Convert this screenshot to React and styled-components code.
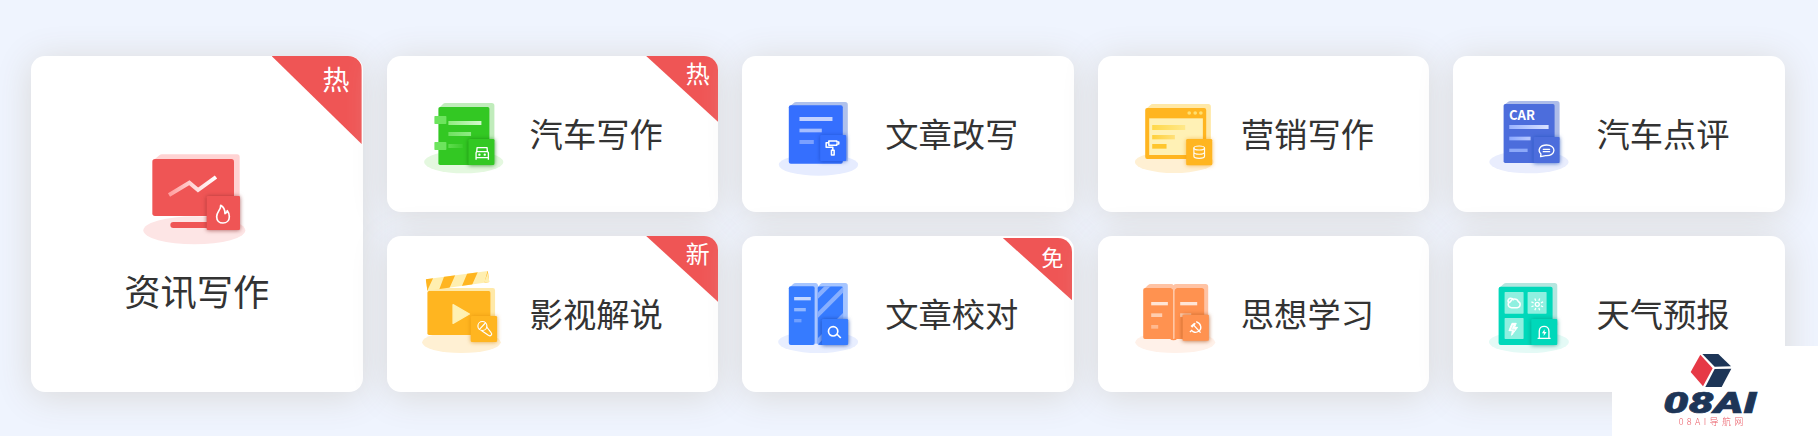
import React from "react";
import styled, { createGlobalStyle, css } from "styled-components";

const GlobalStyle = createGlobalStyle`
  * { box-sizing: border-box; }
  body {
    margin: 0;
    background: #eff4fe;
    font-family: "Noto Sans CJK SC", "Noto Sans", sans-serif;
    color: #333;
  }
`;

const Page = styled.main`
  position: relative;
  height: 436px;
  padding: 56px 33px 44px 31px;
  overflow: hidden;
`;

const Grid = styled.section`
  display: grid;
  grid-template-columns: repeat(5, minmax(0, 1fr));
  grid-template-rows: repeat(2, 156px);
  gap: 24px;
`;

const Card = styled.article`
  position: relative;
  display: flex;
  align-items: center;
  gap: 19px;
  padding-left: 32px;
  border-radius: 14px;
  background: #fff;
  box-shadow: 0 4px 36px #d9d8d8;
  ${(p) =>
    p.$large &&
    css`
      grid-row: span 2;
      flex-direction: column;
      gap: 15px;
      padding: 94px 0 0;
    `}
`;

const CardTitle = styled.h2`
  margin: 0;
  padding-bottom: 3px;
  font-weight: 400;
  font-size: ${(p) => (p.$large ? 36.3 : 33.3)}px;
  line-height: 50px;
  white-space: nowrap;
`;

const ribbonSizes = {
  large: { w: 90, h: 88, top: 0, right: 1, font: 27, padTop: 6, padRight: 12 },
  normal: { w: 72, h: 66, top: 0, right: 0, font: 24, padTop: 0, padRight: 8.5 },
  inset: { w: 70, h: 63, top: 1.5, right: 1.5, font: 22, padTop: 1, padRight: 9 },
};

const Ribbon = styled.span`
  position: absolute;
  top: ${(p) => ribbonSizes[p.$size].top}px;
  right: ${(p) => ribbonSizes[p.$size].right}px;
  width: ${(p) => ribbonSizes[p.$size].w}px;
  height: ${(p) => ribbonSizes[p.$size].h}px;
  padding: ${(p) => `${ribbonSizes[p.$size].padTop}px ${ribbonSizes[p.$size].padRight}px 0 0`};
  border-top-right-radius: 14px;
  background: #ef5555;
  clip-path: polygon(0 0, 100% 0, 100% 100%);
  color: #fff;
  font-size: ${(p) => ribbonSizes[p.$size].font}px;
  line-height: 34px;
  text-align: right;
`;

const IconSvg = styled.svg`
  flex: none;
  display: block;
  width: ${(p) => p.$w || 92}px;
  height: ${(p) => p.$h || 92}px;
  overflow: visible;
`;

const BadgeTile = styled.rect`
  filter: drop-shadow(0 1px 6px ${(p) => p.$shadow});
`;

const Ground = styled.ellipse`
  filter: blur(1.5px);
`;

const Brand = styled.aside`
  position: absolute;
  right: 0;
  bottom: 0;
  width: 206px;
  height: 90px;
  background: #fff;
`;

const glyph = {
  fill: "none",
  stroke: "#fff",
  strokeWidth: 4,
  strokeLinejoin: "round",
  strokeLinecap: "round",
};

function Fade({ id, from, to }) {
  return (
    <linearGradient id={id}>
      <stop offset="0" stopColor={from} />
      <stop offset="1" stopColor={to} />
    </linearGradient>
  );
}

function NewsIcon() {
  return (
    <IconSvg $w={110} $h={100} viewBox="426 360 330 300">
      <defs>
        <linearGradient id="trend" gradientUnits="userSpaceOnUse" x1="505" y1="0" x2="650" y2="0">
          <stop offset="0" stopColor="#ff9a9a" />
          <stop offset="0.5" stopColor="#ffd6d6" />
          <stop offset="1" stopColor="#fff" />
        </linearGradient>
      </defs>
      <Ground cx="583" cy="601" rx="153" ry="42" fill="#fde5e5" />
      <path d="M464 388L478 376Q481 373 486 373H711Q719 373 719 381V510H690V388Z" fill="#ffd3d3" />
      <rect x="457" y="387" width="245" height="171" rx="8" fill="#ef5555" />
      <path d="M507 495L568 458L594 480L648 441" fill="none" stroke="url(#trend)" strokeWidth="12" />
      <rect x="511" y="576" width="130" height="18" rx="9" fill="#ef5555" />
      <BadgeTile $shadow="#8f2b2bbb" x="620" y="498" width="100" height="102" rx="4" fill="#ef5555" />
      <path
        {...glyph}
        strokeWidth="5"
        d="M662 526C664 538 650 545 650 560C650 572 658 579 669 579C680 579 688 571 688 560C688 553 686 547 682 542C681 547 679 550 675 551C675 541 671 531 662 526Z"
      />
    </IconSvg>
  );
}

function CarWritingIcon() {
  return (
    <IconSvg viewBox="115.8 144 276 276">
      <defs>
        <Fade id="g1" from="#8fec7f" to="#d5f8cf" />
        <Fade id="g2" from="#6fe060" to="#8fec84" />
        <Fade id="g3" from="#5ddc4c" to="#3ecc2e" />
      </defs>
      <Ground cx="250" cy="366" rx="119" ry="34" fill="#e4f8df" />
      <path d="M178 202L187 193Q190 189 196 189H334Q342 189 342 197V305H320V202Z" fill="#c0ecbb" />
      <rect x="174" y="201" width="153" height="174" rx="5" fill="#33c823" />
      <rect x="162" y="228" width="36" height="24" rx="2" fill="#6de45e" />
      <rect x="162" y="306" width="36" height="24" rx="2" fill="#6de45e" />
      <rect x="204" y="243" width="99" height="12" fill="url(#g1)" />
      <rect x="204" y="276" width="68" height="12" fill="url(#g2)" />
      <rect x="204" y="312" width="43" height="12" fill="url(#g3)" />
      <BadgeTile $shadow="#147c0acc" x="264" y="297" width="78" height="78" rx="4" fill="#33c823" />
      <path {...glyph} strokeLinecap="butt" d="M289 335L290 323H320L321 335M287 359V338Q287 335 291 335H320Q324 335 324 338V359M287 353H324" />
      <circle cx="297" cy="344" r="3.5" fill="#fff" />
      <circle cx="313" cy="344" r="3.5" fill="#fff" />
    </IconSvg>
  );
}

function RewriteIcon() {
  return (
    <IconSvg viewBox="117.6 144 276 276">
      <Ground cx="251" cy="374" rx="119" ry="33" fill="#e6ecff" />
      <path d="M166 198L176 190Q179 186 185 186H331Q339 186 339 194V364H318V198Z" fill="#afc1ec" />
      <rect x="162" y="196" width="162" height="175" rx="6" fill="#356ffe" />
      <rect x="194" y="231" width="99" height="12" fill="#c2d2ff" />
      <rect x="194" y="266" width="67" height="11" fill="#a5beff" />
      <rect x="194" y="300" width="43" height="12" fill="#7ba0ff" />
      <BadgeTile $shadow="#1a48c4cc" x="256" y="285" width="78" height="78" rx="3" fill="#356ffe" />
      <path
        {...glyph}
        strokeWidth="4.5"
        d="M282 303H306V306H312V312H306V316H282ZM282 308H274V322H294V329M290 331H298V345H290Z"
      />
    </IconSvg>
  );
}

function MarketingIcon() {
  return (
    <IconSvg viewBox="119.4 144 276 276">
      <defs>
        <Fade id="m1" from="#ffd849" to="#ffe88a" />
        <Fade id="m2" from="#ffd03a" to="#ffe07a" />
      </defs>
      <Ground cx="252" cy="366" rx="118" ry="33" fill="#fff0d3" />
      <path d="M170 205L180 196Q183 192 188 192H354Q362 192 362 200V310H340V205Z" fill="#ffe8a6" />
      <rect x="165" y="204" width="183" height="153" rx="6" fill="#ffb520" />
      <rect x="177" y="235" width="161" height="110" fill="#fff1b5" />
      {[297, 315, 332].map((x) => (
        <circle key={x} cx={x} cy="219" r="5.5" fill="#ffe070" />
      ))}
      <rect x="186" y="255" width="99" height="15" fill="url(#m1)" />
      <rect x="186" y="285" width="68" height="13" fill="url(#m2)" />
      <rect x="186" y="312" width="43" height="14" fill="#ffc62e" />
      <BadgeTile $shadow="#f0950099" x="288" y="297" width="78" height="79" rx="4" fill="#ffb520" />
      <g {...glyph} strokeWidth="3.5" opacity="0.95">
        <ellipse cx="327" cy="324" rx="16" ry="6" />
        <path d="M311 324V349C311 357 343 357 343 349V324M311 336C311 345 343 345 343 336" />
      </g>
    </IconSvg>
  );
}

const IconLabel = styled.text`
  font-family: "Noto Sans CJK SC", "Noto Sans", sans-serif;
  font-weight: 700;
  font-size: 40px;
  fill: #fff;
`;

function CarReviewIcon() {
  return (
    <IconSvg viewBox="121.2 144 276 276">
      <defs>
        <Fade id="r1" from="#9ab3ff" to="#d9e2ff" />
        <Fade id="r2" from="#8aa8ff" to="#b9caff" />
      </defs>
      <Ground cx="253" cy="366" rx="119" ry="34" fill="#e9edfd" />
      <path d="M181 193L190 186Q193 183 198 183H337Q345 183 345 191V300H320V193Z" fill="#adbce9" />
      <rect x="177" y="192" width="153" height="177" rx="5" fill="#4c6ddc" />
      <IconLabel x="193" y="239" textLength="78" lengthAdjust="spacingAndGlyphs">CAR</IconLabel>
      <rect x="194" y="255" width="118" height="12" fill="url(#r1)" />
      <rect x="194" y="290" width="64" height="11" fill="url(#r2)" />
      <rect x="194" y="326" width="55" height="10" fill="#8ca8f8" />
      <BadgeTile $shadow="#1d4fb8cc" x="267" y="291" width="78" height="78" rx="3" fill="#4c6ddc" />
      <path {...glyph} d="M289 342C278 331 285 315 306 315C319 315 328 322 328 331C328 341 318 348 303 347L288 350ZM296 328H315M296 335H315" />
    </IconSvg>
  );
}

function FilmIcon() {
  return (
    <IconSvg viewBox="115.8 129 276 276">
      <defs>
        <clipPath id="clap">
          <path d="M136 163L322 138L327 171L141 197Z" />
        </clipPath>
      </defs>
      <Ground cx="243" cy="352" rx="118" ry="32" fill="#fff0d3" />
      <path d="M141 199L154 189H337Q344 189 344 196V290H320V199Z" fill="#ffe9a8" />
      <g clipPath="url(#clap)">
        <path d="M130 130H335V202H130Z" fill="#ffefb0" />
        <path d="M130 155H160L143 192L142 200H130ZM192 152L226 147L206 192L175 197ZM262 142L294 137L274 182L243 187ZM322 136L335 134V176L312 173Z" fill="#ffb520" />
        <path d="M326 134V174L309 178Z" fill="#ffefb0" />
      </g>
      <rect x="141" y="198" width="189" height="132" rx="5" fill="#ffb520" />
      <path d="M218 239L267 267L218 295Z" fill="#fff1b2" stroke="#fff1b2" strokeWidth="4" strokeLinejoin="round" />
      <BadgeTile $shadow="#d58200aa" x="271" y="273" width="79" height="78" rx="4" fill="#ffb520" />
      <circle cx="306" cy="303" r="13.5" {...glyph} strokeWidth="3.5" />
      <path {...glyph} strokeWidth="3.5" d="M297 313L315 294M304 317L324 331C331 335 337 328 332 323L319 306" />
    </IconSvg>
  );
}

function ProofreadIcon() {
  return (
    <IconSvg viewBox="117.6 129 276 276">
      <defs>
        <clipPath id="panel">
          <rect x="248" y="184" width="77" height="176" rx="6" />
        </clipPath>
      </defs>
      <Ground cx="250" cy="351" rx="120" ry="33" fill="#e8eeff" />
      <path d="M164 188L174 178Q178 174 183 174H242Q248 174 250 181V355H238V188Z" fill="#a6c5ff" />
      <path d="M248 188L256 178Q259 174 264 174H331Q339 174 339 182V300H248Z" fill="#a6c5ff" />
      <rect x="162" y="184" width="78" height="176" rx="6" fill="#367bff" />
      <rect x="240" y="188" width="9" height="168" fill="#a9c5ff" />
      <g clipPath="url(#panel)">
        <path d="M248 184H325V360H248Z" fill="#367bff" />
        <path d="M230 232L290 172M240 279L340 179M236 362L336 262" stroke="#87afff" strokeWidth="13" />
      </g>
      <rect x="178" y="216" width="50" height="10" fill="#c5d8ff" />
      <rect x="178" y="249" width="35" height="10" fill="#90b6ff" />
      <rect x="178" y="282" width="22" height="10" fill="#6f9fff" />
      <BadgeTile $shadow="#163e9ccc" x="261" y="282" width="79" height="78" rx="4" fill="#367bff" />
      <circle cx="295" cy="319" r="14" {...glyph} strokeWidth="5" />
      <path d="M306 327L318 339" {...glyph} strokeWidth="5" strokeLinecap="butt" />
    </IconSvg>
  );
}

function StudyIcon() {
  return (
    <IconSvg viewBox="119.4 129 276 276">
      <Ground cx="255" cy="352" rx="120" ry="32" fill="#fff1e9" />
      <path d="M164 190L173 181Q177 177 182 177H243Q248 177 250 181Q252 177 258 177H346Q354 177 354 185V290H340V190Z" fill="#ffc3a4" />
      <path d="M159 195Q159 189 165 189H241Q249 189 250 197V342H164Q159 342 159 337ZM252 197Q253 189 261 189H336Q342 189 342 195V342H252Z" fill="#ff9250" />
      <path d="M240 342H260Q258 346 250 346Q242 346 240 342Z" fill="#ff9250" />
      <path d="M251 194V340" stroke="#ffc9a8" strokeWidth="3" />
      <path d="M244 189H258L251 198Z" fill="#ffc3a4" />
      <rect x="183" y="231" width="50" height="10" fill="#ffe5d6" />
      <rect x="270" y="231" width="51" height="10" fill="#ffe5d6" />
      <rect x="183" y="265" width="33" height="11" fill="#ffceb0" />
      <rect x="270" y="265" width="33" height="11" fill="#ffceb0" />
      <rect x="183" y="300" width="21" height="11" fill="#ffb98f" />
      <BadgeTile $shadow="#a54b14cc" x="277" y="269" width="79" height="78" rx="3" fill="#ff9250" />
      <path {...glyph} strokeLinecap="butt" d="M318 290C334 296 336 312 325 319C317 325 308 321 305 317M299 321L306 315M309 299L331 323" />
      <path d="M301 303L312 293L317 296L306 308Z" fill="#fff" />
    </IconSvg>
  );
}

function WeatherIcon() {
  const rays = Array.from({ length: 8 }, (_, i) => i * 45 + 22.5);
  return (
    <IconSvg viewBox="121.2 129 276 276">
      <Ground cx="253" cy="351" rx="120" ry="33" fill="#e4faf6" />
      <path d="M166 187L176 178Q180 174 185 174H330Q338 174 338 182V300H318V187Z" fill="#b3e6df" />
      <rect x="162" y="185" width="162" height="175" rx="6" fill="#00d8ba" />
      <rect x="180" y="201" width="57" height="65" rx="2" fill="#8ff0e0" />
      <rect x="249" y="201" width="57" height="65" rx="2" fill="#8ff0e0" />
      <rect x="180" y="279" width="57" height="63" rx="2" fill="#8ff0e0" />
      <path {...glyph} strokeWidth="4.5" d="M201 248C188 247 188 232 198 230C201 219 218 219 221 230C229 232 229 247 218 248ZM193 234C186 226 194 216 204 221L207 224" />
      <circle cx="278" cy="238" r="6" {...glyph} />
      {rays.map((a) => (
        <path key={a} d="M278 226V219" {...glyph} strokeLinecap="butt" transform={`rotate(${a} 278 238)`} />
      ))}
      <path d="M202 295H215L210 307H219L201 331L203 317H193Z" fill="#fff" stroke="#fff" strokeWidth="3" strokeLinejoin="round" />
      <path d="M206 300L200 313H210L208 318" fill="none" stroke="#b9f5ea" strokeWidth="2" />
      <BadgeTile $shadow="#058a78bb" x="260" y="282" width="78" height="78" rx="3" fill="#00d8ba" />
      <path {...glyph} strokeLinecap="butt" d="M279 340H318M284 339V319C284 299 313 299 313 319V339" />
      <path d="M300 313L292 325H298L297 333L306 321H300Z" fill="#fff" />
    </IconSvg>
  );
}

const BrandArt = styled.svg`
  display: block;
  width: 100%;
  height: 100%;
`;

const BrandName = styled.text`
  font-family: Roboto, "Liberation Sans", sans-serif;
  font-weight: 900;
  font-style: italic;
  font-size: 89px;
  fill: #1d3557;
  stroke: #1d3557;
  stroke-width: 2px;
`;

const BrandTag = styled.text`
  font-family: "Noto Sans CJK SC", sans-serif;
  font-size: 27px;
  font-weight: 300;
  fill: #e63946;
  opacity: 0.85;
`;

function BrandLogo() {
  return (
    <BrandArt viewBox="501 363 618 270">
      <path d="M766 389L803 430L774 484L737 441Z" fill="#e63946" />
      <path d="M772 387H820L858 424L809 425Z" fill="#1d3557" />
      <path d="M809 432L859 431L830 486H781Z" fill="#1d3557" />
      <BrandName x="655" y="565" textLength="280" lengthAdjust="spacingAndGlyphs">08AI</BrandName>
      <BrandTag x="701" y="599" textLength="194">08AI导航网</BrandTag>
    </BrandArt>
  );
}

const tools = [
  { title: "资讯写作", Icon: NewsIcon, large: true, tag: "热", ribbon: "large" },
  { title: "汽车写作", Icon: CarWritingIcon, tag: "热", ribbon: "normal" },
  { title: "文章改写", Icon: RewriteIcon },
  { title: "营销写作", Icon: MarketingIcon },
  { title: "汽车点评", Icon: CarReviewIcon },
  { title: "影视解说", Icon: FilmIcon, tag: "新", ribbon: "normal" },
  { title: "文章校对", Icon: ProofreadIcon, tag: "免", ribbon: "inset" },
  { title: "思想学习", Icon: StudyIcon },
  { title: "天气预报", Icon: WeatherIcon },
];

export default function App() {
  return (
    <>
      <GlobalStyle />
      <Page>
        <Grid>
          {tools.map(({ title, Icon, large, tag, ribbon }) => (
            <Card key={title} $large={large}>
              <Icon />
              <CardTitle $large={large}>{title}</CardTitle>
              {tag && <Ribbon $size={ribbon}>{tag}</Ribbon>}
            </Card>
          ))}
        </Grid>
        <Brand>
          <BrandLogo />
        </Brand>
      </Page>
    </>
  );
}
